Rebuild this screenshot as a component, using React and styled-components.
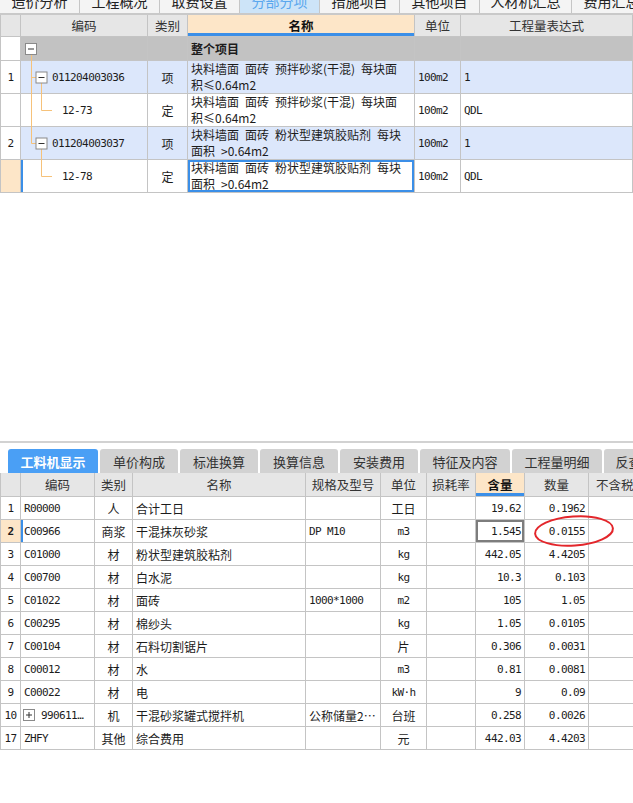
import React from "react";
import styled, { createGlobalStyle, css } from "styled-components";

const LINE = "#c4c4c4";
const HEAD = "#e6e6e6";
const PEACH = "#fde6c8";
const BLUE = "#3b8fe8";
const ROWBLUE = "#dce7fb";
const ROOTGRAY = "#c2c2c2";
const ORANGE = "#f6c27a";

const Global = createGlobalStyle`
  html, body { margin: 0; padding: 0; background: #fff; }
  body {
    font-family: "Noto Sans CJK SC", "Noto Sans", sans-serif;
    font-size: 12px;
    color: #1c1c1c;
    width: 633px;
    overflow: hidden;
  }
`;

const Page = styled.div`
  width: 633px;
  height: 803px;
  overflow: hidden;
  display: flex;
  flex-direction: column;
  background: #fff;
`;

const TopTabBar = styled.div`
  display: flex;
  flex-shrink: 0;
  height: 13px;
  border-bottom: 2px solid #c9c9c9;
  overflow: hidden;
`;

const TopTab = styled.div`
  flex: 0 0 ${(p) => p.$w}px;
  box-sizing: border-box;
  border-right: 1px solid #c6c6c6;
  background: ${(p) => (p.$active ? "#cde4f8" : "#f4f4f4")};
  color: ${(p) => (p.$active ? "#5aa7ee" : "#222")};
  font-size: 14px;
  line-height: 14px;
  text-align: center;
  overflow: hidden;
`;

const TopTabLabel = styled.div`
  margin-top: -6px;
  white-space: nowrap;
`;

const Grid = styled.div`
  display: grid;
  flex-shrink: 0;
  grid-template-columns: ${(p) => p.$cols};
  grid-template-rows: ${(p) => p.$rows};
  border-left: 1px solid ${LINE};
`;

const Cell = styled.div`
  box-sizing: border-box;
  min-width: 0;
  border-right: 1px solid ${LINE};
  border-bottom: 1px solid ${LINE};
  background: ${(p) => p.$bg || "#fff"};
  display: flex;
  align-items: center;
  justify-content: ${(p) =>
    p.$align === "center" ? "center" : p.$align === "right" ? "flex-end" : "flex-start"};
  padding: 0 ${(p) => (p.$pad != null ? p.$pad : 3)}px;
  padding-left: ${(p) => (p.$indent != null ? p.$indent : p.$pad != null ? p.$pad : 3)}px;
  position: relative;
  overflow: ${(p) => (p.$overlay ? "visible" : "hidden")};
  white-space: nowrap;
  font-weight: ${(p) => (p.$bold ? 700 : 400)};
  ${(p) => p.$overlay && css`z-index: 3;`}
  ${(p) => p.$selected && css`box-shadow: inset 0 0 0 2px ${BLUE};`}
  ${(p) => p.$markLeft && css`box-shadow: inset 2px 0 0 ${BLUE};`}
  ${(p) => p.$focus && css`box-shadow: inset 0 0 0 2px #7d7d7d;`}
`;

const HeadCell = styled(Cell)`
  background: ${(p) => (p.$active ? PEACH : HEAD)};
  justify-content: center;
  font-size: 12.5px;
  color: ${(p) => (p.$active ? "#111" : "#333")};
  font-weight: ${(p) => (p.$active ? 700 : 400)};
  ${(p) => p.$active && css`box-shadow: inset 0 -3px 0 ${BLUE};`}
`;

const TwoLine = styled.div`
  display: flex;
  flex-direction: column;
  line-height: 16px;
  font-size: 12px;
  align-self: flex-start;
`;

const Mono = styled.span`
  font-family: "DejaVu Sans Mono", "Liberation Mono", monospace;
  font-size: 11px;
  letter-spacing: -0.6px;
  white-space: pre;
`;

const TreeSvg = styled.svg`
  position: absolute;
  left: 0;
  top: 0;
  overflow: visible;
  pointer-events: none;
`;

const Divider = styled.div`
  flex-shrink: 0;
  margin-top: 248px;
  border-top: 2px solid #d2d2d2;
`;

const LowerTabs = styled.div`
  display: flex;
  flex-shrink: 0;
  gap: 2px;
  padding-left: 8px;
  margin-top: 6px;
  height: 24px;
  overflow: hidden;
`;

const LowerTab = styled.div`
  flex: 0 0 ${(p) => p.$w}px;
  box-sizing: border-box;
  border-radius: 3px 3px 0 0;
  background: ${(p) => (p.$active ? "#4a9ff5" : "#d2d2d2")};
  color: ${(p) => (p.$active ? "#fff" : "#333")};
  font-weight: ${(p) => (p.$active ? 700 : 400)};
  font-size: 13px;
  display: flex;
  align-items: center;
  justify-content: center;
  white-space: nowrap;
  overflow: hidden;
`;

const Ellipse = styled.svg`
  position: absolute;
  left: 0;
  top: -8px;
  overflow: visible;
  pointer-events: none;
`;

function MinusBox({ x, y, plus }) {
  return (
    <g>
      <rect x={x + 0.5} y={y + 0.5} width="11" height="11" fill="#fff" stroke="#8a8a8a" />
      <line x1={x + 3} y1={y + 6} x2={x + 9} y2={y + 6} stroke="#333" />
      {plus && <line x1={x + 6} y1={y + 3} x2={x + 6} y2={y + 9} stroke="#333" />}
    </g>
  );
}

function Tree({ kind, last, parentLast }) {
  if (kind === "root") {
    return (
      <TreeSvg width="127" height="24">
        <line x1="10.5" y1="17" x2="10.5" y2="25" stroke={ORANGE} />
        <MinusBox x={4} y={6} />
      </TreeSvg>
    );
  }
  if (kind === "item") {
    return (
      <TreeSvg width="127" height="33">
        <line x1="10.5" y1="0" x2="10.5" y2={last ? 16.5 : 34} stroke={ORANGE} />
        <line x1="10.5" y1="16.5" x2="15" y2="16.5" stroke={ORANGE} />
        <line x1="20.5" y1="21" x2="20.5" y2="34" stroke={ORANGE} />
        <MinusBox x={14.5} y={10.5} />
      </TreeSvg>
    );
  }
  return (
    <TreeSvg width="127" height="33">
      {!parentLast && <line x1="10.5" y1="0" x2="10.5" y2="34" stroke={ORANGE} />}
      <line x1="20.5" y1="0" x2="20.5" y2="16.5" stroke={ORANGE} />
      <line x1="20.5" y1="16.5" x2="31" y2="16.5" stroke={ORANGE} />
    </TreeSvg>
  );
}

const topTabs = [
  ["造价分析", 80],
  ["工程概况", 80],
  ["取费设置", 80],
  ["分部分项", 80, true],
  ["措施项目", 80],
  ["其他项目", 80],
  ["人材机汇总", 92],
  ["费用汇总", 80],
];

const SP = "\u2002";
const NAME_A = [`块料墙面${SP}面砖${SP}预拌砂浆(干混)${SP}每块面`, "积≤0.64m2"];
const NAME_B = [`块料墙面${SP}面砖${SP}粉状型建筑胶贴剂${SP}每块`, `面积${SP}>0.64m2`];

const upperRows = [
  { idx: "1", kind: "item", code: "011204003036", type: "项", name: NAME_A, expr: "1" },
  { idx: "", kind: "child", code: "12-73", type: "定", name: NAME_A, expr: "QDL" },
  { idx: "2", kind: "item", last: true, code: "011204003037", type: "项", name: NAME_B, expr: "1" },
  {
    idx: "",
    kind: "child",
    parentLast: true,
    current: true,
    code: "12-78",
    type: "定",
    name: NAME_B,
    expr: "QDL",
  },
];

const lowerTabs = [
  ["工料机显示", 90, true],
  ["单价构成", 78],
  ["标准换算", 78],
  ["换算信息", 78],
  ["安装费用", 78],
  ["特征及内容", 90],
  ["工程量明细", 90],
  ["反查图形工程量", 114],
];

const lowerRows = [
  ["1", "R00000", "人", "合计工日", "", "工日", "19.62", "0.1962"],
  ["2", "C00966", "商浆", "干混抹灰砂浆", "DP M10", "m3", "1.545", "0.0155"],
  ["3", "C01000", "材", "粉状型建筑胶粘剂", "", "kg", "442.05", "4.4205"],
  ["4", "C00700", "材", "白水泥", "", "kg", "10.3", "0.103"],
  ["5", "C01022", "材", "面砖", "1000*1000", "m2", "105", "1.05"],
  ["6", "C00295", "材", "棉纱头", "", "kg", "1.05", "0.0105"],
  ["7", "C00104", "材", "石料切割锯片", "", "片", "0.306", "0.0031"],
  ["8", "C00012", "材", "水", "", "m3", "0.81", "0.0081"],
  ["9", "C00022", "材", "电", "", "kW·h", "9", "0.09"],
  ["10", "990611…", "机", "干混砂浆罐式搅拌机", "公称储量2…", "台班", "0.258", "0.0026"],
  ["17", "ZHFY", "其他", "综合费用", "", "元", "442.03", "4.4203"],
];

const isLatin = (s) => /^[\x00-\x7F·…*]+$/.test(s);
const Txt = ({ s }) => (isLatin(s) ? <Mono>{s}</Mono> : <span>{s}</span>);

export default function App() {
  return (
    <Page>
      <Global />
      <TopTabBar>
        {topTabs.map(([t, w, a]) => (
          <TopTab key={t} $w={w} $active={a}>
            <TopTabLabel>{t}</TopTabLabel>
          </TopTab>
        ))}
      </TopTabBar>

      <Grid $cols="20px 127px 40px 227px 46px 172px" $rows="22px 24px repeat(4, 33px)">
        <HeadCell />
        <HeadCell>编码</HeadCell>
        <HeadCell>类别</HeadCell>
        <HeadCell $active>名称</HeadCell>
        <HeadCell>单位</HeadCell>
        <HeadCell>工程量表达式</HeadCell>

        <Cell />
        <Cell $bg={ROOTGRAY} $overlay>
          <Tree kind="root" />
        </Cell>
        <Cell $bg={ROOTGRAY} />
        <Cell $bg={ROOTGRAY} $bold>
          整个项目
        </Cell>
        <Cell $bg={ROOTGRAY} />
        <Cell $bg={ROOTGRAY} />

        {upperRows.map((r, i) => {
          const bg = r.kind === "item" ? ROWBLUE : "#fff";
          return (
            <React.Fragment key={i}>
              <Cell $align="center" $bg={r.current ? PEACH : "#fff"}>
                <Mono>{r.idx}</Mono>
              </Cell>
              <Cell $bg={bg} $overlay $indent={r.kind === "item" ? 31 : 41} $markLeft={r.current}>
                <Tree kind={r.kind} last={r.last} parentLast={r.parentLast} />
                <Mono>{r.code}</Mono>
              </Cell>
              <Cell $bg={bg} $align="center">
                {r.type}
              </Cell>
              <Cell $bg={bg} $selected={r.current}>
                <TwoLine>
                  <span>{r.name[0]}</span>
                  <span>{r.name[1]}</span>
                </TwoLine>
              </Cell>
              <Cell $bg={bg}>
                <Mono>100m2</Mono>
              </Cell>
              <Cell $bg={bg}>
                <Mono>{r.expr}</Mono>
              </Cell>
            </React.Fragment>
          );
        })}
      </Grid>

      <Divider />

      <LowerTabs>
        {lowerTabs.map(([t, w, a]) => (
          <LowerTab key={t} $w={w} $active={a}>
            {t}
          </LowerTab>
        ))}
      </LowerTabs>

      <Grid
        $cols="20px 74px 38px 173px 75px 46px 49px 49px 64px 90px"
        $rows="24px repeat(11, 23px)"
      >
        <HeadCell />
        <HeadCell>编码</HeadCell>
        <HeadCell>类别</HeadCell>
        <HeadCell>名称</HeadCell>
        <HeadCell>规格及型号</HeadCell>
        <HeadCell>单位</HeadCell>
        <HeadCell>损耗率</HeadCell>
        <HeadCell $active>含量</HeadCell>
        <HeadCell>数量</HeadCell>
        <HeadCell>不含税市场价</HeadCell>

        {lowerRows.map((r, i) => {
          const sel = i === 1;
          return (
            <React.Fragment key={i}>
              <Cell $align="center" $pad={0} $bg={sel ? PEACH : "#fff"} $bold={sel}>
                <Mono>{r[0]}</Mono>
              </Cell>
              <Cell $markLeft={sel} $overlay={r[0] === "10"} $indent={r[0] === "10" ? 20 : 3}>
                {r[0] === "10" && (
                  <TreeSvg width="20" height="23">
                    <MinusBox x={2} y={5} plus />
                  </TreeSvg>
                )}
                <Mono>{r[1]}</Mono>
              </Cell>
              <Cell $align="center">{r[2]}</Cell>
              <Cell>{r[3]}</Cell>
              <Cell>
                <Txt s={r[4]} />
              </Cell>
              <Cell $align="center">
                <Txt s={r[5]} />
              </Cell>
              <Cell />
              <Cell $align="right" $focus={sel}>
                <Mono>{r[6]}</Mono>
              </Cell>
              <Cell $align="right" $overlay={sel}>
                <Mono>{r[7]}</Mono>
                {sel && (
                  <Ellipse width="100" height="40">
                    <ellipse
                      cx="49"
                      cy="19"
                      rx="39"
                      ry="14.5"
                      transform="rotate(-4 49 19)"
                      fill="none"
                      stroke="#e3262b"
                      strokeWidth="2"
                    />
                  </Ellipse>
                )}
              </Cell>
              <Cell />
            </React.Fragment>
          );
        })}
      </Grid>
    </Page>
  );
}
